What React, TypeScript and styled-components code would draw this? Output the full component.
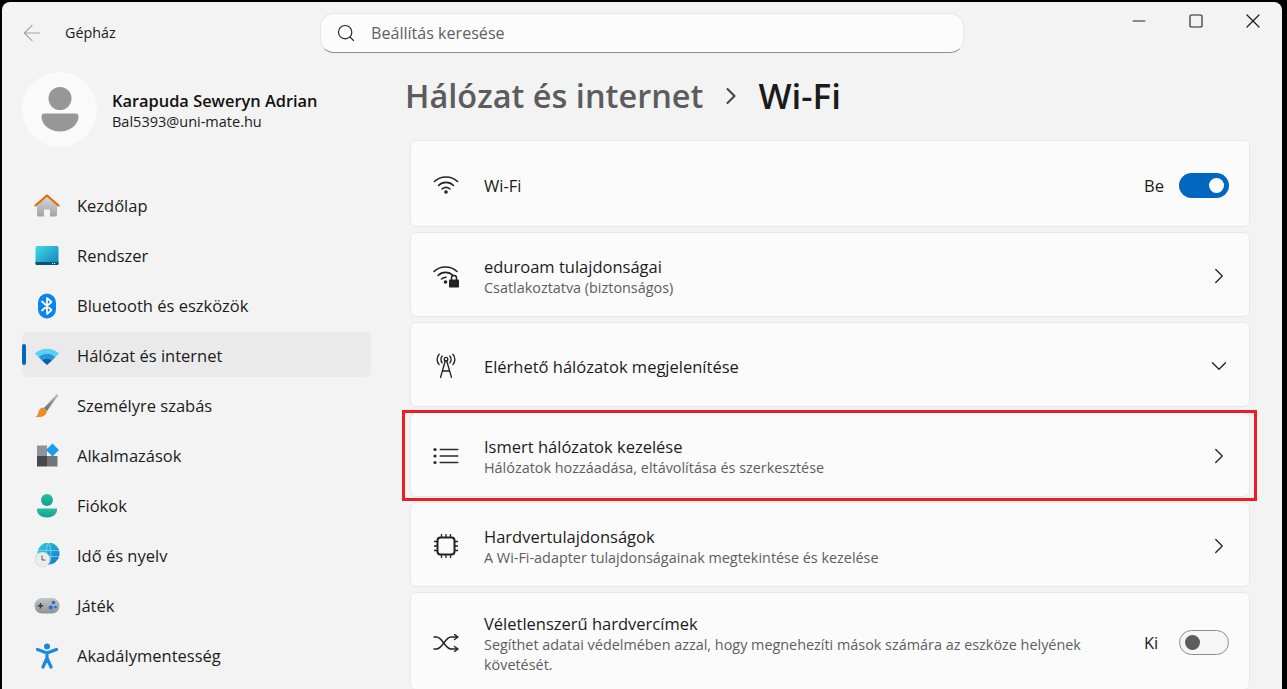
import React from 'react'
import styled, { createGlobalStyle } from 'styled-components'
import { ChevronDown, ChevronRight, Minus, Search, X, Square, ArrowLeft } from 'lucide-react'

const GlobalStyle = createGlobalStyle`
  html, body {
    margin: 0;
    height: 100%;
    background: #000;
    overflow: hidden;
  }
  * {
    box-sizing: border-box;
  }
`

const Window = styled.div`
  margin: 2px 0 0 2px;
  width: 1280px;
  height: 687px;
  background: #f3f3f3;
  border-radius: 8px 8px 0 0;
  font-family: 'Open Sans', 'Noto Sans', sans-serif;
  color: #1b1b1b;
  overflow: hidden;
  display: flex;
  flex-direction: column;
`

const TitleBar = styled.header`
  height: 58px;
  flex-shrink: 0;
  display: flex;
  align-items: flex-start;
  padding-left: 17px;
`

const BackButton = styled.div`
  width: 26px;
  height: 26px;
  margin-top: 18px;
  color: #a4a4a4;
`

const AppName = styled.div`
  width: 255px;
  margin: 22px 0 0 20px;
  font-size: 14.3px;
  line-height: 18px;
`

const SearchBox = styled.div`
  width: 644px;
  height: 40px;
  margin-top: 11px;
  padding-left: 15px;
  display: flex;
  align-items: center;
  gap: 15px;
  background: #fcfcfc;
  border: 1px solid #e6e6e6;
  border-bottom-color: #8e8e8e;
  border-radius: 14px;
  font-size: 16.1px;
  color: #5f5f5f;
`

const WindowControls = styled.div`
  margin: 0 1px 0 auto;
  width: 171px;
  height: 38px;
  display: flex;
`

const ControlButton = styled.div`
  flex: 1;
  display: flex;
  align-items: center;
  justify-content: center;
  color: #1f1f1f;
`

const Body = styled.div`
  flex: 1;
  min-height: 0;
  display: flex;
`

const Sidebar = styled.aside`
  width: 408px;
  flex-shrink: 0;
  padding: 12px 39px 0 20px;
`

const Profile = styled.div`
  display: flex;
  align-items: center;
  gap: 15px;
  margin-bottom: 35px;
`

const Avatar = styled.div`
  width: 75px;
  height: 75px;
  border-radius: 50%;
  background: #fafafa;
  display: flex;
  align-items: center;
  justify-content: center;
`

const ProfileText = styled.div`
  padding-top: 2px;
`

const ProfileName = styled.div`
  font-size: 16.4px;
  font-weight: 600;
  line-height: 21px;
  color: #111;
`

const ProfileMail = styled.div`
  margin-top: 1px;
  font-size: 14.5px;
  line-height: 20px;
`

const NavList = styled.nav`
  display: flex;
  flex-direction: column;
  gap: 5px;
`

const NavItem = styled.div<{ $active?: boolean }>`
  position: relative;
  height: 45px;
  padding: 2px 0 0 12px;
  display: flex;
  align-items: center;
  gap: 17px;
  border-radius: 6px;
  font-size: 16.5px;
  background: ${({ $active }) => ($active ? '#eaeaea' : 'transparent')};

  &::before {
    content: '';
    display: ${({ $active }) => ($active ? 'block' : 'none')};
    position: absolute;
    left: 0;
    top: 12px;
    width: 4px;
    height: 21px;
    border-radius: 2px;
    background: #0067c0;
  }
`

const NavIcon = styled.svg`
  width: 26px;
  height: 26px;
  flex-shrink: 0;
`

const Main = styled.main`
  flex: 1;
  min-width: 0;
  padding-right: 32px;
`

const Breadcrumb = styled.h1`
  margin: 13px 0 21px -5px;
  height: 46px;
  display: flex;
  align-items: center;
  font-size: 32.5px;
  line-height: 46px;
  font-weight: 600;
  color: #5c5c5c;
`

const Crumb = styled.span`
  font-size: 35px;
  color: #1b1b1b;
`

const CrumbArrow = styled.span`
  width: 55px;
  display: flex;
  justify-content: center;
  color: #444;
`

const CardList = styled.section`
  display: flex;
  flex-direction: column;
  gap: 5px;
`

const Card = styled.div<{ $height: number }>`
  position: relative;
  height: ${({ $height }) => $height}px;
  flex-shrink: 0;
  padding: 3px 20px 0 20px;
  display: flex;
  align-items: center;
  background: #fbfbfb;
  border: 1px solid #e8e8e8;
  border-radius: 6px;
`

const CardIcon = styled.div`
  width: 30px;
  height: 30px;
  margin-right: 23px;
  flex-shrink: 0;
  display: flex;
  align-items: center;
  justify-content: center;
  color: #222;
`

const CardText = styled.div`
  flex: 1;
  min-width: 0;
  padding: 2px 40px 0 0;
`

const CardTitle = styled.div`
  font-size: 16.5px;
  line-height: 22px;
`

const CardDesc = styled.div`
  font-size: 14.4px;
  line-height: 20px;
  color: #5e5e5e;
`

const StateLabel = styled.span`
  font-size: 16.5px;
  width: 35px;
`

const Toggle = styled.div<{ $on: boolean }>`
  width: 50px;
  height: 25px;
  padding: 0 5px;
  display: flex;
  align-items: center;
  justify-content: ${({ $on }) => ($on ? 'flex-end' : 'flex-start')};
  border-radius: 13px;
  background: ${({ $on }) => ($on ? '#0067c0' : '#f6f6f6')};
  border: ${({ $on }) => ($on ? 'none' : '1px solid #8d8d8d')};

  &::after {
    content: '';
    width: 15px;
    height: 15px;
    border-radius: 50%;
    background: ${({ $on }) => ($on ? '#fff' : '#5d5d5d')};
  }
`

const Chevron = styled.div`
  display: flex;
  margin-right: -3px;
  color: #222;
`

const Highlight = styled.div`
  position: absolute;
  inset: -3px -8px -5px -9px;
  border: 3px solid #ee1c25;
  pointer-events: none;
`

const HomeIcon = () => (
  <NavIcon viewBox="0 0 26 26">
    <defs>
      <linearGradient id="homeWall" x1="0" y1="0" x2="0" y2="1">
        <stop offset="0" stopColor="#d9d9d9" />
        <stop offset="1" stopColor="#a3a3a3" />
      </linearGradient>
    </defs>
    <path d="M3 12 13 3l10 9v10a1.5 1.5 0 0 1-1.500 1.500H16v-7h-6v7H4.500A1.500 1.500 0 0 1 3 22z" fill="url(#homeWall)" />
    <path d="M1.500 12.500 13 2.500l11.500 10" fill="none" stroke="#e06c00" strokeWidth="2.200" strokeLinecap="round" strokeLinejoin="round" />
  </NavIcon>
)

const SystemIcon = () => (
  <NavIcon viewBox="0 0 26 26">
    <defs>
      <linearGradient id="sysScreen" x1="0" y1="0" x2="1" y2="1">
        <stop offset="0" stopColor="#3fdbe8" />
        <stop offset="1" stopColor="#1280b8" />
      </linearGradient>
    </defs>
    <rect x="1.500" y="3" width="23" height="19" rx="1.500" fill="url(#sysScreen)" />
    <path d="M1.500 19h23v1.500a1.500 1.500 0 0 1-1.500 1.500H3a1.500 1.500 0 0 1-1.500-1.500z" fill="#0e5273" />
    <rect x="18" y="20" width="1.200" height="1" fill="#cfe8f2" />
    <rect x="20" y="20" width="1.200" height="1" fill="#cfe8f2" />
  </NavIcon>
)

const BluetoothIcon = () => (
  <NavIcon viewBox="0 0 26 26">
    <rect x="4" y="0.500" width="18" height="25" rx="9" fill="#0a84f0" />
    <path d="M8 8.500 17.500 17 13 21V5l4.500 4L8 17.500" fill="none" stroke="#fff" strokeWidth="1.700" strokeLinejoin="round" strokeLinecap="round" />
  </NavIcon>
)

const NetworkIcon = () => (
  <NavIcon viewBox="0 0 26 26">
    <path d="M1 10.500C7.500 4 18.500 4 25 10.500L21.500 14C17 9.500 9 9.500 4.500 14z" fill="#5cd0f2" />
    <path d="M4.500 14C9 9.500 17 9.500 21.500 14L18 17.500C15 14.500 11 14.500 8 17.500z" fill="#1a9be0" />
    <path d="M8 17.500C11 14.500 15 14.500 18 17.500L13 22z" fill="#0f5fa8" />
  </NavIcon>
)

const BrushIcon = () => (
  <NavIcon viewBox="0 0 26 26">
    <defs>
      <linearGradient id="brushStem" x1="0" y1="1" x2="1" y2="0">
        <stop offset="0" stopColor="#5e6870" />
        <stop offset="1" stopColor="#b9bec4" />
      </linearGradient>
    </defs>
    <path d="M10 15 22.500 1.500c1-.8 2 .2 1.500 1.200L13 18z" fill="url(#brushStem)" />
    <path d="M9.500 14.500 13 18c-.5 3.500-3 6-8 6H1.500c2.500-1.500 2.500-4 3.500-6.500.8-1.700 2.500-3 4.500-3z" fill="#ee8a2a" />
  </NavIcon>
)

const AppsIcon = () => (
  <NavIcon viewBox="0 0 26 26">
    <rect x="3" y="2.500" width="10" height="10.500" fill="#8f9499" />
    <rect x="3" y="13" width="10" height="10.500" fill="#45494d" />
    <rect x="13" y="13" width="10.500" height="10.500" fill="#70757a" />
    <path d="M18.500 0.500 25 7l-6.500 6.500L12 7z" fill="#1a9cf0" />
  </NavIcon>
)

const AccountIcon = () => (
  <NavIcon viewBox="0 0 26 26">
    <defs>
      <linearGradient id="acc" x1="0" y1="0" x2="0" y2="1">
        <stop offset="0" stopColor="#27bfa6" />
        <stop offset="1" stopColor="#12a08c" />
      </linearGradient>
    </defs>
    <circle cx="13" cy="7" r="6" fill="url(#acc)" />
    <path d="M3 15.500h20v1.500c0 4.500-4.500 7.500-10 7.500S3 21.500 3 17z" fill="url(#acc)" />
  </NavIcon>
)

const TimeIcon = () => (
  <NavIcon viewBox="0 0 26 26">
    <defs>
      <linearGradient id="globe" x1="0" y1="0" x2="1" y2="1">
        <stop offset="0" stopColor="#33d0e0" />
        <stop offset="1" stopColor="#0e74c8" />
      </linearGradient>
    </defs>
    <circle cx="14.500" cy="10.500" r="11" fill="url(#globe)" />
    <path d="M14.500 0c-3 3-3 18 0 21M14.500 0c3 3 3 18 0 21M4 7.500h21M4 13.500h21" fill="none" stroke="#8fdcec" strokeWidth="0.700" />
    <circle cx="8.500" cy="16.500" r="7.500" fill="#ececec" stroke="#c4c4c4" strokeWidth="0.500" />
    <path d="M8 12.500v4.500h3.500" fill="none" stroke="#444" strokeWidth="0.900" />
  </NavIcon>
)

const GameIcon = () => (
  <NavIcon viewBox="0 0 26 26">
    <defs>
      <linearGradient id="pad" x1="0" y1="0" x2="0" y2="1">
        <stop offset="0" stopColor="#c2c6ca" />
        <stop offset="1" stopColor="#8d9297" />
      </linearGradient>
    </defs>
    <rect x="0.500" y="5" width="25" height="15.500" rx="7.500" fill="url(#pad)" />
    <path d="M6.500 10v5.500M3.800 12.750h5.400" stroke="#3c3c3c" strokeWidth="1.500" />
    <circle cx="19.500" cy="9.500" r="1.800" fill="#1a6fd0" />
    <circle cx="16.800" cy="14.500" r="2" fill="#1a6fd0" />
    <circle cx="21.500" cy="14" r="1.300" fill="#1a6fd0" />
  </NavIcon>
)

const AccessIcon = () => (
  <NavIcon viewBox="0 0 26 26">
    <circle cx="13" cy="3.500" r="3" fill="#1a8ae0" />
    <path d="M3.500 6.500 13 10l9.500-3.500M13 10v5M13 15l-4 9M13 15l4 9" fill="none" stroke="#1a8ae0" strokeWidth="3.200" strokeLinecap="round" strokeLinejoin="round" />
  </NavIcon>
)

const WifiGlyph = () => (
  <svg width="26" height="20" viewBox="0 0 26 20" fill="none" stroke="#222" strokeWidth="1.600" strokeLinecap="round">
    <path d="M1.500 6.500C7.500 0.500 18.500 0.500 24.500 6.500" />
    <path d="M5.500 10.500C9.500 6.300 16.500 6.300 20.500 10.500" />
    <path d="M9 14C11.500 12 14.500 12 17 14" />
    <circle cx="13" cy="17" r="1.800" fill="#222" stroke="none" />
  </svg>
)

const WifiLockGlyph = () => (
  <svg width="28" height="24" viewBox="0 0 28 24" fill="none" stroke="#222" strokeWidth="1.600" strokeLinecap="round">
    <path d="M2 7.500C8 1.500 19 1.500 25 7.500" />
    <path d="M6 11.500C10 7.300 17 7.300 21 11.500" />
    <path d="M9.500 15C11 13.800 12.500 13.300 14 13.300" />
    <circle cx="13.500" cy="18" r="1.800" fill="#222" stroke="none" />
    <rect x="17" y="15.500" width="10" height="8" rx="1" fill="#222" stroke="none" />
    <path d="M19.500 15.500V14a2.500 2.500 0 0 1 5 0v1.500" strokeWidth="1.500" />
  </svg>
)

const TowerGlyph = () => (
  <svg width="20" height="26" viewBox="0 0 22 28" fill="none" stroke="#222" strokeWidth="1.500" strokeLinecap="round" strokeLinejoin="round">
    <circle cx="11" cy="6.500" r="2" />
    <path d="M6.800 3C5 5 5 8.500 6.800 10.500M15.200 3C17 5 17 8.500 15.200 10.500" />
    <path d="M3.500 1C0.500 4 0.500 9.500 3.500 12.500M18.500 1C21.500 4 21.500 9.500 18.500 12.500" />
    <path d="M10 9 5 26.500M12 9l5 17.500M7.500 19.500h7" />
  </svg>
)

const ListGlyph = () => (
  <svg width="26" height="18" viewBox="0 0 26 18" fill="#2a2a2a" stroke="none">
    <circle cx="2" cy="2.500" r="1.600" />
    <circle cx="2" cy="9" r="1.600" />
    <circle cx="2" cy="15.500" r="1.600" />
    <rect x="6.500" y="1.700" width="19" height="1.500" rx="0.700" />
    <rect x="6.500" y="8.300" width="19" height="1.500" rx="0.700" />
    <rect x="6.500" y="14.800" width="19" height="1.500" rx="0.700" />
  </svg>
)

const ChipGlyph = () => (
  <svg width="26" height="26" viewBox="0 0 26 26" fill="none" stroke="#222" strokeWidth="1.300">
    <rect x="4.500" y="4.500" width="17" height="17" rx="3" strokeWidth="2" />
    <path d="M8.500 1v3M13 1v3M17.500 1v3M8.500 22v3M13 22v3M17.500 22v3M1 8.500h3M1 13h3M1 17.500h3M22 8.500h3M22 13h3M22 17.500h3" />
  </svg>
)

const ShuffleGlyph = () => (
  <svg width="26" height="18" viewBox="0 0 26 18" fill="none" stroke="#222" strokeWidth="1.400" strokeLinecap="round" strokeLinejoin="round">
    <path d="M1 3h2.500c6 0 8.500 12 14.500 12h6.500" />
    <path d="M1 15h2.500c6 0 8.500-12 14.500-12h6.500" />
    <path d="M21.500 0.500 25 3l-3.500 2.500" />
    <path d="M21.500 12.500 25 15l-3.500 2.500" />
  </svg>
)

const navItems = [
  { label: 'Kezdőlap', icon: <HomeIcon /> },
  { label: 'Rendszer', icon: <SystemIcon /> },
  { label: 'Bluetooth és eszközök', icon: <BluetoothIcon /> },
  { label: 'Hálózat és internet', icon: <NetworkIcon />, active: true },
  { label: 'Személyre szabás', icon: <BrushIcon /> },
  { label: 'Alkalmazások', icon: <AppsIcon /> },
  { label: 'Fiókok', icon: <AccountIcon /> },
  { label: 'Idő és nyelv', icon: <TimeIcon /> },
  { label: 'Játék', icon: <GameIcon /> },
  { label: 'Akadálymentesség', icon: <AccessIcon /> },
]

const App = () => (
  <>
    <GlobalStyle />
    <Window>
      <TitleBar>
        <BackButton>
          <ArrowLeft size={26} strokeWidth={1.1} />
        </BackButton>
        <AppName>Gépház</AppName>
        <SearchBox>
          <Search size={20} strokeWidth={1.4} color="#222" />
          Beállítás keresése
        </SearchBox>
        <WindowControls>
          <ControlButton>
            <Minus size={20} strokeWidth={1.4} />
          </ControlButton>
          <ControlButton>
            <Square size={16} strokeWidth={1.7} />
          </ControlButton>
          <ControlButton>
            <X size={24} strokeWidth={1.2} />
          </ControlButton>
        </WindowControls>
      </TitleBar>
      <Body>
        <Sidebar>
          <Profile>
            <Avatar>
              <svg width="38" height="46" viewBox="0 0 38 46" fill="#979797">
                <circle cx="19" cy="11.500" r="11.500" />
                <path d="M3.500 26.500h31a3 3 0 0 1 3 3c0 8-8 15-18.500 15S.5 37.500.5 29.500a3 3 0 0 1 3-3z" />
              </svg>
            </Avatar>
            <ProfileText>
              <ProfileName>Karapuda Seweryn Adrian</ProfileName>
              <ProfileMail>Bal5393@uni-mate.hu</ProfileMail>
            </ProfileText>
          </Profile>
          <NavList>
            {navItems.map((item) => (
              <NavItem key={item.label} $active={item.active}>
                {item.icon}
                {item.label}
              </NavItem>
            ))}
          </NavList>
        </Sidebar>
        <Main>
          <Breadcrumb>
            Hálózat és internet
            <CrumbArrow>
              <ChevronRight size={28} strokeWidth={1.8} />
            </CrumbArrow>
            <Crumb>Wi-Fi</Crumb>
          </Breadcrumb>
          <CardList>
            <Card $height={87}>
              <CardIcon>
                <WifiGlyph />
              </CardIcon>
              <CardText>
                <CardTitle>Wi-Fi</CardTitle>
              </CardText>
              <StateLabel>Be</StateLabel>
              <Toggle $on />
            </Card>
            <Card $height={85}>
              <CardIcon>
                <WifiLockGlyph />
              </CardIcon>
              <CardText>
                <CardTitle>eduroam tulajdonságai</CardTitle>
                <CardDesc>Csatlakoztatva (biztonságos)</CardDesc>
              </CardText>
              <Chevron>
                <ChevronRight size={26} strokeWidth={1.2} />
              </Chevron>
            </Card>
            <Card $height={85}>
              <CardIcon>
                <TowerGlyph />
              </CardIcon>
              <CardText>
                <CardTitle>Elérhető hálózatok megjelenítése</CardTitle>
              </CardText>
              <Chevron>
                <ChevronDown size={26} strokeWidth={1.2} />
              </Chevron>
            </Card>
            <Card $height={85}>
              <Highlight />
              <CardIcon>
                <ListGlyph />
              </CardIcon>
              <CardText>
                <CardTitle>Ismert hálózatok kezelése</CardTitle>
                <CardDesc>Hálózatok hozzáadása, eltávolítása és szerkesztése</CardDesc>
              </CardText>
              <Chevron>
                <ChevronRight size={26} strokeWidth={1.2} />
              </Chevron>
            </Card>
            <Card $height={85}>
              <CardIcon>
                <ChipGlyph />
              </CardIcon>
              <CardText>
                <CardTitle>Hardvertulajdonságok</CardTitle>
                <CardDesc>A Wi-Fi-adapter tulajdonságainak megtekintése és kezelése</CardDesc>
              </CardText>
              <Chevron>
                <ChevronRight size={26} strokeWidth={1.2} />
              </Chevron>
            </Card>
            <Card $height={98}>
              <CardIcon>
                <ShuffleGlyph />
              </CardIcon>
              <CardText>
                <CardTitle>Véletlenszerű hardvercímek</CardTitle>
                <CardDesc>
                  Segíthet adatai védelmében azzal, hogy megnehezíti mások számára az eszköze helyének követését.
                </CardDesc>
              </CardText>
              <StateLabel>Ki</StateLabel>
              <Toggle $on={false} />
            </Card>
          </CardList>
        </Main>
      </Body>
    </Window>
  </>
)

export default App
